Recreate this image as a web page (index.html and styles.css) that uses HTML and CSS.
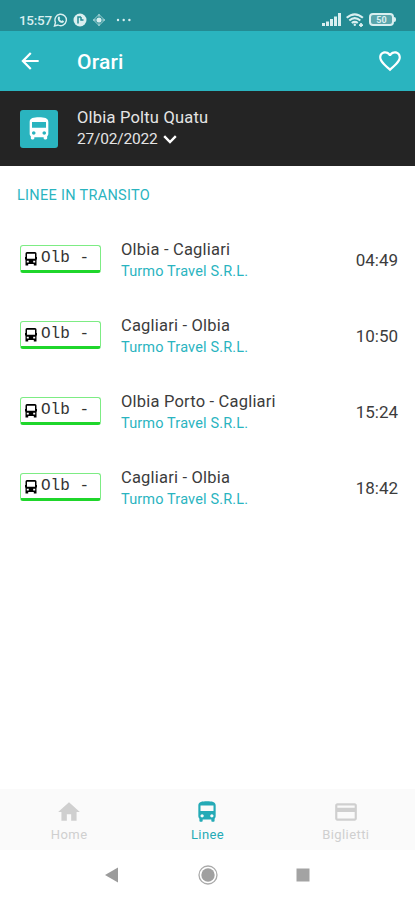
FILE: index.html
```html
<!DOCTYPE html>
<html lang="it">
  <head>
    <meta charset="UTF-8" />
    <meta name="viewport" content="width=device-width, initial-scale=1.0" />
    <title>Orari</title>
    <link rel="stylesheet" href="styles.css">
  </head>
  <body>
    <!-- shared icons -->
    <svg class="sprite">
      <symbol id="bus" viewBox="0 0 24 24">
        <path d="M4 16c0 .88.39 1.67 1 2.22V20c0 .55.45 1 1 1h1c.55 0 1-.45 1-1v-1h8v1c0 .55.45 1 1 1h1c.55 0 1-.45 1-1v-1.78c.61-.55 1-1.34 1-2.22V6c0-3.5-3.58-4-8-4s-8 .5-8 4v10zm3.5 1c-.83 0-1.5-.67-1.5-1.5S6.67 14 7.5 14s1.5.67 1.5 1.5S8.33 17 7.5 17zm9 0c-.83 0-1.5-.67-1.5-1.5s.67-1.5 1.5-1.5 1.5.67 1.5 1.5-.67 1.5-1.5 1.5zm1.5-6H6V6h12v5z" />
      </symbol>
      <symbol id="bus-small" viewBox="0 0 12 14">
        <path fill-rule="evenodd" d="M2 0h8q1.500 0 1.500 1.500V5h.5v2.500h-.5V13.500H8.800V12H3.200v1.500H.5V7.500H0V5h.5V1.500Q.5 0 2 0zM2 1.800v5h8v-5zM1.800 8.800v1.600h2V8.800zm6.400 0v1.600h2V8.800z" />
      </symbol>
    </svg>

    <div class="status-bar">
      <span class="clock">15:57</span>
      <svg class="status-left" width="80" height="14" viewBox="0 0 80 14">
        <path d="M1.500 13l1-3.600A5.700 5.700 0 1 1 5 12z" fill="none" stroke="currentColor" stroke-width="1.400" />
        <path d="M5.100 3.800l1.300-.3.800 1.800-.7.800q.8 1.500 2 2l.9-.8 1.700.9q-.3 1.800-2 1.800Q5.100 9.200 4.700 5.500z" fill="currentColor" />
        <circle cx="27" cy="7" r="6.500" fill="currentColor" />
        <path d="M25 10.500V4h3M28 4v3h2.500" fill="none" stroke="#238b93" stroke-width="1.500" />
        <path d="M46 1.500L51.500 7 46 12.500 40.500 7z" fill="none" stroke="currentColor" opacity=".7" />
        <circle cx="46" cy="7" r="2.600" fill="currentColor" />
        <path d="M46 1v3M46 10v3M40 7h3M49 7h3" stroke="currentColor" opacity=".7" />
        <circle cx="65" cy="7" r="1.200" fill="currentColor" />
        <circle cx="70.700" cy="7" r="1.200" fill="currentColor" />
        <circle cx="76.400" cy="7" r="1.200" fill="currentColor" />
      </svg>
      <div class="status-right">
        <svg width="19" height="13" viewBox="0 0 19 13" fill="currentColor">
          <path d="M0 10h3v3H0zM4 8.500h3V13H4zM8 6h3v7H8zM12 3.500h3V13h-3zM16 0h3v13h-3z" />
        </svg>
        <svg width="18" height="14" viewBox="0 0 18 14" fill="none" stroke="currentColor" stroke-width="2.100">
          <path d="M.7 4.800q8-7 16.200 0M3.300 7.500q5.500-4.700 11 0M5.800 10q3-2.400 6 0" />
          <circle cx="8.800" cy="11.800" r="1.200" fill="currentColor" stroke="none" />
          <path d="M13 12.200h4M15 10v4" stroke-width="1.700" />
        </svg>
        <span class="battery">50</span>
      </div>
    </div>

    <header class="app-bar">
      <svg class="back" width="26" height="26" viewBox="0 0 24 24" fill="currentColor">
        <path d="M20 11H7.830l5.590-5.590L12 4l-8 8 8 8 1.410-1.410L7.830 13H20v-2z" />
      </svg>
      <h1>Orari</h1>
      <svg width="26" height="26" viewBox="0 0 24 24" fill="currentColor">
        <path d="M16.500 3c-1.740 0-3.410.810-4.500 2.090C10.910 3.810 9.240 3 7.500 3 4.420 3 2 5.420 2 8.500c0 3.780 3.400 6.860 8.550 11.540L12 21.350l1.450-1.320C18.600 15.360 22 12.280 22 8.500 22 5.420 19.580 3 16.500 3zm-4.400 15.550l-.1.100-.1-.1C7.140 14.240 4 11.390 4 8.500 4 6.500 5.500 5 7.500 5c1.540 0 3.040.990 3.570 2.360h1.870C13.460 5.990 14.960 5 16.500 5c2 0 3.500 1.500 3.500 3.500 0 2.890-3.140 5.740-7.900 10.050z" />
      </svg>
    </header>

    <section class="stop">
      <div class="stop-icon">
        <svg width="28" height="28"><use href="#bus" /></svg>
      </div>
      <div>
        <div class="stop-name">Olbia Poltu Quatu</div>
        <div class="stop-date">
          <span>27/02/2022</span>
          <svg width="14" height="9" viewBox="0 0 14 9" fill="none" stroke="currentColor" stroke-width="2.400">
            <path d="M1.200 1.200L7 7l5.800-5.800" />
          </svg>
        </div>
      </div>
    </section>

    <main>
      <h2>LINEE IN TRANSITO</h2>
      <ul class="lines">
        <li>
          <div class="badge"><svg width="12" height="14"><use href="#bus-small" /></svg><span>Olb -</span></div>
          <div class="route">
            <div class="name">Olbia - Cagliari</div>
            <div class="company">Turmo Travel S.R.L.</div>
          </div>
          <div class="time">04:49</div>
        </li>
        <li>
          <div class="badge"><svg width="12" height="14"><use href="#bus-small" /></svg><span>Olb -</span></div>
          <div class="route">
            <div class="name">Cagliari - Olbia</div>
            <div class="company">Turmo Travel S.R.L.</div>
          </div>
          <div class="time">10:50</div>
        </li>
        <li>
          <div class="badge"><svg width="12" height="14"><use href="#bus-small" /></svg><span>Olb -</span></div>
          <div class="route">
            <div class="name">Olbia Porto - Cagliari</div>
            <div class="company">Turmo Travel S.R.L.</div>
          </div>
          <div class="time">15:24</div>
        </li>
        <li>
          <div class="badge"><svg width="12" height="14"><use href="#bus-small" /></svg><span>Olb -</span></div>
          <div class="route">
            <div class="name">Cagliari - Olbia</div>
            <div class="company">Turmo Travel S.R.L.</div>
          </div>
          <div class="time">18:42</div>
        </li>
      </ul>
    </main>

    <nav class="tabs">
      <div class="tab">
        <svg width="26" height="26" viewBox="0 0 24 24" fill="currentColor"><path d="M10 20v-6h4v6h5v-8h3L12 3 2 12h3v8z" /></svg>
        <span>Home</span>
      </div>
      <div class="tab active">
        <svg width="26" height="26"><use href="#bus" /></svg>
        <span>Linee</span>
      </div>
      <div class="tab">
        <svg width="26" height="26" viewBox="0 0 24 24" fill="currentColor"><path d="M20 4H4c-1.110 0-1.990.890-1.990 2L2 18c0 1.110.890 2 2 2h16c1.110 0 2-.890 2-2V6c0-1.110-.890-2-2-2zm0 14H4v-6h16v6zm0-10H4V6h16v2z" /></svg>
        <span>Biglietti</span>
      </div>
    </nav>

    <div class="system-nav">
      <svg width="14" height="16" viewBox="0 0 14 16"><path d="M0 8l13-7.500v15z" fill="#9b9b9b" /></svg>
      <svg width="20" height="20" viewBox="0 0 20 20">
        <circle cx="10" cy="10" r="9" fill="none" stroke="#aaa" stroke-width="1.300" />
        <circle cx="10" cy="10" r="6.700" fill="#a0a0a0" />
      </svg>
      <svg width="14" height="14" viewBox="0 0 14 14"><path d="M.5.500h13v13H.5z" fill="#a3a3a3" /></svg>
    </div>
  </body>
</html>
```
FILE: styles.css
```css
* {
  box-sizing: border-box;
}
body {
  margin: 0;
  height: 900px;
  display: flex;
  flex-direction: column;
  background: #fff;
  font-family: Roboto, "Liberation Sans", sans-serif;
}
svg {
  display: block;
  flex: none;
}
.sprite {
  display: none;
}
.status-bar {
  height: 31px;
  padding: 8px 21px 0 19px;
  display: flex;
  align-items: center;
  background: #238b93;
  color: #d9eff0;
}
.clock {
  width: 34px;
  font-size: 13.5px;
  font-weight: 500;
  letter-spacing: -0.3px;
}
.status-right {
  margin-left: auto;
  display: flex;
  align-items: center;
  gap: 5px;
}
.battery {
  position: relative;
  width: 25px;
  height: 13px;
  border: 2px solid #d9eff0;
  border-radius: 4px;
  background: #5aa6ac;
  font-size: 9px;
  font-weight: 700;
  line-height: 10px;
  text-align: center;
}
.battery::after {
  content: "";
  position: absolute;
  right: -4px;
  top: 2px;
  width: 2px;
  height: 5px;
  border-radius: 0 2px 2px 0;
  background: #d9eff0;
}

.app-bar {
  height: 60px;
  padding: 0 12px 0 17px;
  display: flex;
  align-items: center;
  background: #2ab4bf;
  color: #fff;
}
.app-bar h1 {
  flex: 1;
  margin: 2px 0 0 34px;
  font-size: 21px;
  font-weight: 500;
  letter-spacing: 0.2px;
}

.stop {
  height: 75px;
  padding: 0 20px;
  display: flex;
  align-items: center;
  gap: 19px;
  background: #242424;
  color: #e4e4e4;
}
.stop-icon {
  width: 38px;
  height: 38px;
  display: grid;
  place-items: center;
  border-radius: 3px;
  background: #2ab4bf;
  color: #fff;
  fill: currentColor;
}
.stop-name {
  font-size: 16.5px;
  line-height: 22px;
  letter-spacing: 0.2px;
}
.stop-date {
  display: flex;
  align-items: center;
  gap: 6px;
  font-size: 15.5px;
  line-height: 21px;
  letter-spacing: -0.2px;
}
.stop-date svg {
  color: #fff;
}

main {
  flex: 1;
}
h2 {
  margin: 0;
  padding: 20px 17px 0;
  height: 56px;
  color: #2ab4bf;
  font-size: 14.5px;
  font-weight: 400;
  line-height: 19px;
  letter-spacing: 0.3px;
}
.lines {
  margin: 0;
  padding: 0;
  list-style: none;
}
.lines li {
  height: 76px;
  padding: 0 17px 0 20px;
  display: flex;
  align-items: center;
}
.badge {
  width: 81px;
  height: 28px;
  margin: 0 20px 3px 0;
  padding-left: 4px;
  display: flex;
  align-items: center;
  gap: 4px;
  border: 1px solid #7dec84;
  border-bottom: 3px solid #1fd62b;
  border-radius: 3px;
  color: #333;
  font-family: "Liberation Mono", monospace;
  font-size: 16px;
  white-space: pre;
}
.badge svg {
  margin-top: 2px;
}
.route {
  flex: 1;
}
.name {
  color: #3c3c3c;
  font-size: 16.5px;
  line-height: 22px;
  letter-spacing: 0.2px;
}
.company {
  color: #2ab4bf;
  font-size: 14.5px;
  line-height: 21px;
  letter-spacing: 0.15px;
}
.time {
  color: #3c3c3c;
  font-size: 17px;
}

.tabs {
  height: 61px;
  display: flex;
  background: #fafafa;
}
.tab {
  flex: 1;
  padding-top: 10px;
  display: flex;
  flex-direction: column;
  align-items: center;
  color: #cfcfcf;
  fill: currentColor;
  font-size: 13px;
  letter-spacing: 0.4px;
}
.tab svg {
  height: 26px;
}
.tab span {
  margin-top: 2px;
}
.tab.active {
  color: #24aab6;
}

.system-nav {
  height: 50px;
  padding: 0 105px;
  display: flex;
  align-items: center;
  justify-content: space-between;
}
```
